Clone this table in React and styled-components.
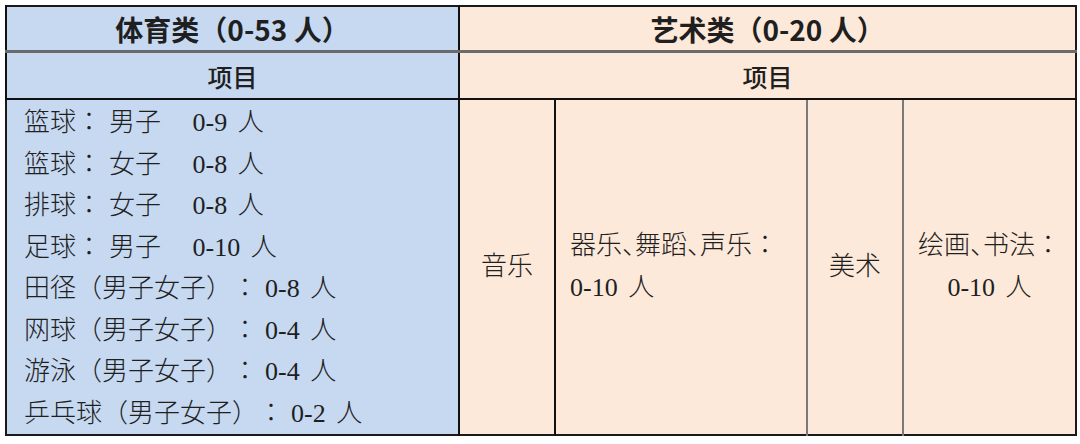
import React from "react";
import styled, { createGlobalStyle } from "styled-components";

const GlobalStyle = createGlobalStyle`
    body {
        margin: 0;
        background: #ffffff;
    }
    * {
        text-spacing-trim: space-all;
    }
`;

const Page = styled.div`
    padding: 5px 0 0 5px;
`;

const Table = styled.table`
    width: 1070px;
    border-collapse: collapse;
    table-layout: fixed;
    border: 2px solid #1a1a1a;
    color: #1f1f1f;
`;

const HeadCell = styled.th`
    height: ${(p) => p.$h}px;
    padding: 0;
    background: ${(p) => (p.$art ? "#fde9d9" : "#c6d9f1")};
    font-family: "Noto Sans CJK SC", "Noto Sans", sans-serif;
    font-size: ${(p) => (p.$sub ? 25 : 28)}px;
    font-weight: ${(p) => (p.$sub ? 500 : 700)};
    text-align: center;
    border-left: 2px solid #111;
    border-bottom: ${(p) => (p.$sub ? "2px solid #111" : "3px solid #6b6b6b")};
`;

const SportCell = styled.td`
    background: #c6d9f1;
    padding: 2px 0 0 17px;
    vertical-align: top;
    border-right: 2px solid #111;
`;

const SportLine = styled.div`
    height: 41.5px;
    line-height: 41.5px;
    font-family: "Liberation Serif", "Noto Sans CJK JP", serif;
    font-size: 26px;
    font-weight: 300;
    white-space: pre;
    word-spacing: 4px;
`;

const Colon = styled.span`
    margin-right: 7px;
`;

const Pause = styled.span`
    font-feature-settings: "halt";
`;

const ArtCell = styled.td`
    background: #fde9d9;
    padding: 0 ${(p) => (p.$center ? 0 : 14)}px;
    text-align: ${(p) => (p.$center ? "center" : "left")};
    vertical-align: middle;
    font-family: "Liberation Serif", "Noto Sans CJK JP", serif;
    font-size: 26px;
    font-weight: 300;
    line-height: 42px;
    white-space: pre;
    word-spacing: 4px;
    border-left: 2px solid ${(p) => (p.$light ? "#7a7a7a" : "#111")};
`;

const sports = [
    { name: "篮球", rest: "男子   0-9 人" },
    { name: "篮球", rest: "女子   0-8 人" },
    { name: "排球", rest: "女子   0-8 人" },
    { name: "足球", rest: "男子   0-10 人" },
    { name: "田径（男子女子）", rest: "0-8 人" },
    { name: "网球（男子女子）", rest: "0-4 人" },
    { name: "游泳（男子女子）", rest: "0-4 人" },
    { name: "乒乓球（男子女子）", rest: "0-2 人" },
];

const App = () => {
    return (
        <Page>
            <GlobalStyle />
            <Table>
                <colgroup>
                    <col style={{ width: 453 }} />
                    <col style={{ width: 96 }} />
                    <col style={{ width: 252 }} />
                    <col style={{ width: 96 }} />
                    <col style={{ width: 173 }} />
                </colgroup>
                <thead>
                    <tr>
                        <HeadCell $h={43}>体育类（0-53 人）</HeadCell>
                        <HeadCell $h={43} $art colSpan={4}>
                            艺术类（0-20 人）
                        </HeadCell>
                    </tr>
                    <tr>
                        <HeadCell $h={45} $sub>
                            项目
                        </HeadCell>
                        <HeadCell $h={45} $sub $art colSpan={4}>
                            项目
                        </HeadCell>
                    </tr>
                </thead>
                <tbody>
                    <tr>
                        <SportCell>
                            {sports.map((s, i) => (
                                <SportLine key={i}>
                                    {s.name}
                                    <Colon>：</Colon>
                                    {s.rest}
                                </SportLine>
                            ))}
                        </SportCell>
                        <ArtCell $center>音乐</ArtCell>
                        <ArtCell>
                            器乐<Pause>、</Pause>舞蹈<Pause>、</Pause>声乐：
                            <br />
                            0-10 人
                        </ArtCell>
                        <ArtCell $center $light>
                            美术
                        </ArtCell>
                        <ArtCell $center $light>
                            绘画<Pause>、</Pause>书法：
                            <br />
                            0-10 人
                        </ArtCell>
                    </tr>
                </tbody>
            </Table>
        </Page>
    );
};

export default App;
